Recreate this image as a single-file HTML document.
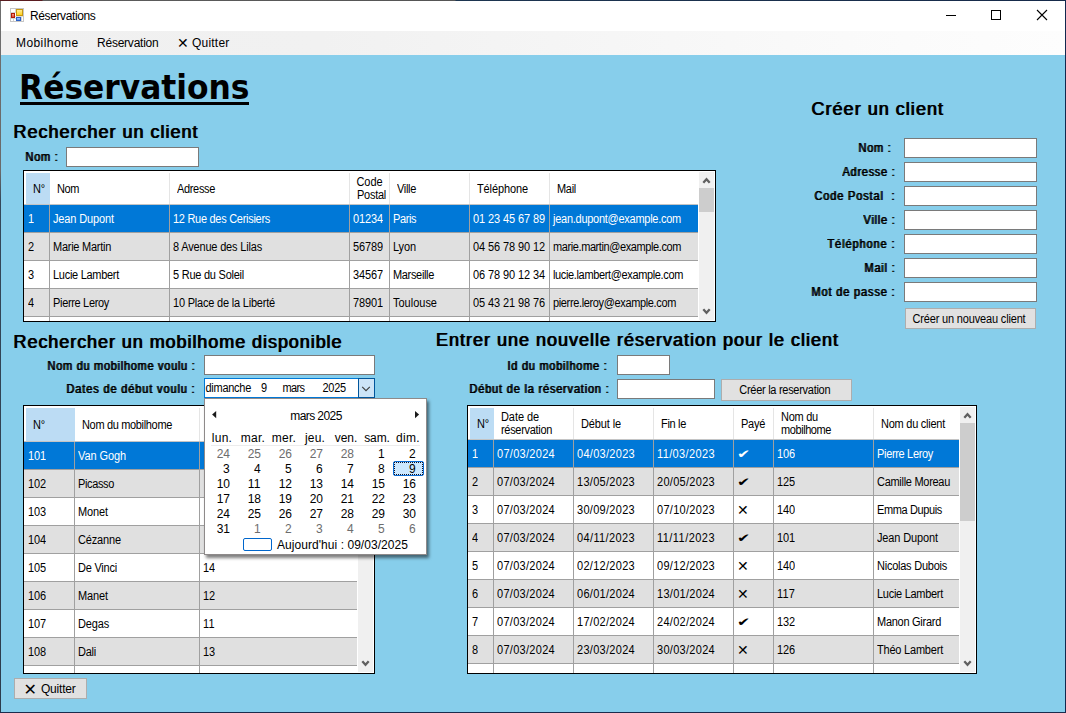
<!DOCTYPE html>
<html lang="fr"><head><meta charset="utf-8"><title>Réservations</title><style>
html,body{margin:0;padding:0}
body{width:1066px;height:713px;overflow:hidden;background:#87CEEB;position:relative;font-family:'Liberation Sans', sans-serif;color:#000}
.a{position:absolute;box-sizing:content-box}
.t{position:absolute;white-space:pre;line-height:normal}
.sb{text-shadow:1px 0 0 currentColor}

#frame{position:absolute;left:0;top:0;width:1066px;height:713px;pointer-events:none}
</style></head>
<body>
<div class="a" id="titlebar" style="left:1px;top:1px;width:1064px;height:30px;background:#fff"></div>
<svg class="a" style="left:10px;top:8px" width="14" height="14" viewBox="0 0 14 14" shape-rendering="crispEdges">
<defs><linearGradient id="gy" x1="0" y1="0" x2="0" y2="1"><stop offset="0" stop-color="#ffeb96"/><stop offset="1" stop-color="#ffd21e"/></linearGradient>
<linearGradient id="gr" x1="0" y1="0" x2="0" y2="1"><stop offset="0" stop-color="#f79a8c"/><stop offset="1" stop-color="#e0483a"/></linearGradient>
<linearGradient id="gb" x1="0" y1="0" x2="0" y2="1"><stop offset="0" stop-color="#a9c8ff"/><stop offset="1" stop-color="#5f94ee"/></linearGradient></defs>
<rect x="0" y="0" width="14" height="14" fill="#c6c6c6"/><rect x="1" y="1" width="12" height="12" fill="#fff"/>
<rect x="5" y="1" width="1" height="4" fill="#d4d4d4"/><rect x="1" y="4" width="5" height="1" fill="#d4d4d4"/>
<rect x="1" y="10" width="5" height="1" fill="#d4d4d4"/><rect x="3" y="10" width="1" height="3" fill="#d4d4d4"/>
<rect x="5" y="8" width="8" height="1" fill="#dcdcdc"/><rect x="11" y="9" width="1" height="4" fill="#d4d4d4"/>
<rect x="6" y="1" width="7" height="7" fill="#c8970e"/><rect x="7" y="2" width="5" height="5" fill="url(#gy)"/>
<rect x="1" y="5" width="4" height="5" fill="#b11a08"/><rect x="2" y="6" width="2" height="3" fill="url(#gr)"/>
<rect x="6" y="9" width="5" height="4" fill="#2c60c6"/><rect x="7" y="10" width="3" height="2" fill="url(#gb)"/>
</svg>
<span class="t " style="font:normal 12px 'Liberation Sans', sans-serif;letter-spacing:-0.378px;left:30.00px;top:9.00px;">Réservations</span>
<svg class="a" style="left:930px;top:1px" width="135" height="30" viewBox="0 0 135 30">
<path d="M16 14.5h10" stroke="#000" stroke-width="1" fill="none"/>
<rect x="61.5" y="9.5" width="9" height="9" stroke="#000" stroke-width="1" fill="none"/>
<path d="M107 9l10 10M117 9l-10 10" stroke="#000" stroke-width="1.1" fill="none"/>
</svg>
<div class="a" id="menubar" style="left:1px;top:31px;width:1064px;height:24px;background:linear-gradient(to right,#f0f0f0 0%,#f1f1f1 30%,#fbfbfb 85%,#fdfdfd 100%)"></div>
<span class="t " style="font:normal 12px 'Liberation Sans', sans-serif;letter-spacing:0.422px;left:16.00px;top:36.00px;">Mobilhome</span>
<span class="t " style="font:normal 12px 'Liberation Sans', sans-serif;letter-spacing:-0.230px;left:97.00px;top:36.00px;">Réservation</span>
<span class="t " style="font:normal 14px 'DejaVu Sans', sans-serif;left:177.00px;top:35.00px;">✕</span>
<span class="t " style="font:normal 12px 'Liberation Sans', sans-serif;letter-spacing:0.212px;left:192.00px;top:36.00px;">Quitter</span>
<span class="t " style="font:bold 33px 'DejaVu Sans Condensed', 'DejaVu Sans', sans-serif;transform:scaleX(1.0552);transform-origin:0 0;left:19.00px;top:68.00px;">Réservations</span>
<div class="a " style="left:20px;top:102px;width:229px;height:3px;background:#000;"></div>
<span class="t sb" style="font:normal 18px 'Liberation Sans', sans-serif;letter-spacing:0.995px;left:13.00px;top:122.00px;">Rechercher un client</span>
<span class="t sb" style="font:normal 18px 'Liberation Sans', sans-serif;letter-spacing:1.029px;left:811.00px;top:99.00px;">Créer un client</span>
<span class="t sb" style="font:normal 18px 'Liberation Sans', sans-serif;letter-spacing:0.936px;left:13.00px;top:332.00px;">Rechercher un mobilhome disponible</span>
<span class="t sb" style="font:normal 18px 'Liberation Sans', sans-serif;letter-spacing:0.995px;left:435.50px;top:329.50px;">Entrer une nouvelle réservation pour le client</span>
<span class="t sb" style="font:normal 11px 'Liberation Sans', sans-serif;letter-spacing:0.731px;transform:scaleY(1.11);transform-origin:0 10.00px;left:25.00px;top:151.00px;">Nom :</span>
<div class="a " style="left:66px;top:147px;width:131px;height:18px;background:#fff;border:1px solid #7A7A7A;"></div>
<span class="t sb" style="font:normal 11px 'Liberation Sans', sans-serif;letter-spacing:0.731px;transform:scaleY(1.11);transform-origin:0 10.00px;left:858.00px;top:142.00px;">Nom :</span>
<div class="a " style="left:904px;top:138px;width:131px;height:18px;background:#fff;border:1px solid #7A7A7A;"></div>
<span class="t sb" style="font:normal 11px 'Liberation Sans', sans-serif;letter-spacing:0.726px;transform:scaleY(1.11);transform-origin:0 10.00px;left:842.00px;top:166.00px;">Adresse :</span>
<div class="a " style="left:904px;top:162px;width:131px;height:18px;background:#fff;border:1px solid #7A7A7A;"></div>
<span class="t sb" style="font:normal 11px 'Liberation Sans', sans-serif;letter-spacing:0.850px;transform:scaleY(1.11);transform-origin:0 10.00px;left:814.00px;top:190.00px;">Code Postal  :</span>
<div class="a " style="left:904px;top:186px;width:131px;height:18px;background:#fff;border:1px solid #7A7A7A;"></div>
<span class="t sb" style="font:normal 11px 'Liberation Sans', sans-serif;letter-spacing:0.757px;transform:scaleY(1.11);transform-origin:0 10.00px;left:863.00px;top:214.00px;">Ville :</span>
<div class="a " style="left:904px;top:210px;width:131px;height:18px;background:#fff;border:1px solid #7A7A7A;"></div>
<span class="t sb" style="font:normal 11px 'Liberation Sans', sans-serif;letter-spacing:0.899px;transform:scaleY(1.11);transform-origin:0 10.00px;left:827.00px;top:238.00px;">Téléphone :</span>
<div class="a " style="left:904px;top:234px;width:131px;height:18px;background:#fff;border:1px solid #7A7A7A;"></div>
<span class="t sb" style="font:normal 11px 'Liberation Sans', sans-serif;letter-spacing:0.786px;transform:scaleY(1.11);transform-origin:0 10.00px;left:864.00px;top:262.00px;">Mail :</span>
<div class="a " style="left:904px;top:258px;width:131px;height:18px;background:#fff;border:1px solid #7A7A7A;"></div>
<span class="t sb" style="font:normal 11px 'Liberation Sans', sans-serif;letter-spacing:0.846px;transform:scaleY(1.11);transform-origin:0 10.00px;left:811.00px;top:286.00px;">Mot de passe :</span>
<div class="a " style="left:904px;top:282px;width:131px;height:18px;background:#fff;border:1px solid #7A7A7A;"></div>
<div class="a " style="left:905px;top:308px;width:129px;height:19px;background:#E1E1E1;border:1px solid #ADADAD;"></div>
<span class="t " style="font:normal 11px 'Liberation Sans', sans-serif;letter-spacing:-0.165px;transform:scaleY(1.11);transform-origin:0 10.00px;left:912.50px;top:313.00px;">Créer un nouveau client</span>
<span class="t sb" style="font:normal 11px 'Liberation Sans', sans-serif;letter-spacing:0.715px;transform:scaleY(1.11);transform-origin:0 10.00px;left:47.00px;top:360.00px;">Nom du mobilhome voulu :</span>
<div class="a " style="left:204px;top:355px;width:169px;height:18px;background:#fff;border:1px solid #7A7A7A;"></div>
<span class="t sb" style="font:normal 11px 'Liberation Sans', sans-serif;letter-spacing:0.860px;transform:scaleY(1.11);transform-origin:0 10.00px;left:66.00px;top:383.00px;">Dates de début voulu :</span>
<span class="t sb" style="font:normal 11px 'Liberation Sans', sans-serif;letter-spacing:0.739px;transform:scaleY(1.11);transform-origin:0 10.00px;left:507.00px;top:360.00px;">Id du mobilhome :</span>
<div class="a " style="left:617px;top:355px;width:51px;height:18px;background:#fff;border:1px solid #7A7A7A;"></div>
<span class="t sb" style="font:normal 11px 'Liberation Sans', sans-serif;letter-spacing:0.806px;transform:scaleY(1.11);transform-origin:0 10.00px;left:469.00px;top:383.00px;">Début de la réservation :</span>
<div class="a " style="left:617px;top:379px;width:96px;height:18px;background:#fff;border:1px solid #7A7A7A;"></div>
<div class="a " style="left:721px;top:379px;width:129px;height:20px;background:#E1E1E1;border:1px solid #ADADAD;"></div>
<span class="t " style="font:normal 11px 'Liberation Sans', sans-serif;letter-spacing:-0.280px;transform:scaleY(1.11);transform-origin:0 10.00px;left:739.25px;top:384.00px;">Créer la reservation</span>
<div class="a grid" style="left:23px;top:170px;width:691px;height:150px;border:1px solid #000;background:#fff;overflow:hidden">
<div class="a" style="left:2px;top:2px;width:24px;height:31px;background:#BCDCF4"></div>
<div class="a" style="left:145px;top:2px;width:1px;height:31px;background:#E5E5E5"></div>
<div class="a" style="left:325px;top:2px;width:1px;height:31px;background:#E5E5E5"></div>
<div class="a" style="left:365px;top:2px;width:1px;height:31px;background:#E5E5E5"></div>
<div class="a" style="left:445px;top:2px;width:1px;height:31px;background:#E5E5E5"></div>
<div class="a" style="left:525px;top:2px;width:1px;height:31px;background:#E5E5E5"></div>
<div class="a" style="left:0;top:33px;width:674px;height:1px;background:#C4C4C4"></div>
<div class="a row" style="left:0;top:34px;width:674px;height:27px;background:#0078D7;border-bottom:1px solid #A0A0A0"></div>
<div class="a row" style="left:0;top:62px;width:674px;height:27px;background:#E0E0E0;border-bottom:1px solid #A0A0A0"></div>
<div class="a row" style="left:0;top:90px;width:674px;height:27px;background:#fff;border-bottom:1px solid #A0A0A0"></div>
<div class="a row" style="left:0;top:118px;width:674px;height:27px;background:#E0E0E0;border-bottom:1px solid #A0A0A0"></div>
<div class="a row" style="left:0;top:146px;width:674px;height:27px;background:#fff;border-bottom:1px solid #A0A0A0"></div>
<div class="a" style="left:25px;top:34px;width:1px;height:116px;background:#A0A0A0"></div>
<div class="a" style="left:145px;top:34px;width:1px;height:116px;background:#A0A0A0"></div>
<div class="a" style="left:325px;top:34px;width:1px;height:116px;background:#A0A0A0"></div>
<div class="a" style="left:365px;top:34px;width:1px;height:116px;background:#A0A0A0"></div>
<div class="a" style="left:445px;top:34px;width:1px;height:116px;background:#A0A0A0"></div>
<div class="a" style="left:525px;top:34px;width:1px;height:116px;background:#A0A0A0"></div>
<div class="a" style="left:674px;top:0;width:17px;height:150px;background:#fff"></div>
<div class="a" style="left:675px;top:1px;width:15px;height:148px;background:#F0F0F0"></div>
<svg class="a" style="left:675px;top:1px" width="15" height="17" viewBox="0 0 15 17"><path d="M4.3 10.8L7.5 7.3L10.7 10.8" stroke="#606060" stroke-width="2.3" fill="none"/></svg>
<svg class="a" style="left:675px;top:132px" width="15" height="17" viewBox="0 0 15 17"><path d="M4.3 6.2L7.5 9.7L10.7 6.2" stroke="#606060" stroke-width="2.3" fill="none"/></svg>
<div class="a" style="left:675px;top:17px;width:15px;height:24px;background:#CDCDCD"></div>
</div>
<div class="a grid" style="left:23px;top:405px;width:350px;height:267px;border:1px solid #000;background:#fff;overflow:hidden">
<div class="a" style="left:2px;top:2px;width:49px;height:33px;background:#BCDCF4"></div>
<div class="a" style="left:175px;top:2px;width:1px;height:33px;background:#E5E5E5"></div>
<div class="a" style="left:0;top:35px;width:333px;height:1px;background:#C4C4C4"></div>
<div class="a row" style="left:0;top:36px;width:333px;height:27px;background:#0078D7;border-bottom:1px solid #A0A0A0"></div>
<div class="a row" style="left:0;top:64px;width:333px;height:27px;background:#E0E0E0;border-bottom:1px solid #A0A0A0"></div>
<div class="a row" style="left:0;top:92px;width:333px;height:27px;background:#fff;border-bottom:1px solid #A0A0A0"></div>
<div class="a row" style="left:0;top:120px;width:333px;height:27px;background:#E0E0E0;border-bottom:1px solid #A0A0A0"></div>
<div class="a row" style="left:0;top:148px;width:333px;height:27px;background:#fff;border-bottom:1px solid #A0A0A0"></div>
<div class="a row" style="left:0;top:176px;width:333px;height:27px;background:#E0E0E0;border-bottom:1px solid #A0A0A0"></div>
<div class="a row" style="left:0;top:204px;width:333px;height:27px;background:#fff;border-bottom:1px solid #A0A0A0"></div>
<div class="a row" style="left:0;top:232px;width:333px;height:27px;background:#E0E0E0;border-bottom:1px solid #A0A0A0"></div>
<div class="a row" style="left:0;top:260px;width:333px;height:27px;background:#fff;border-bottom:1px solid #A0A0A0"></div>
<div class="a" style="left:50px;top:36px;width:1px;height:231px;background:#A0A0A0"></div>
<div class="a" style="left:175px;top:36px;width:1px;height:231px;background:#A0A0A0"></div>
<div class="a" style="left:333px;top:0;width:17px;height:267px;background:#fff"></div>
<div class="a" style="left:334px;top:1px;width:15px;height:265px;background:#F0F0F0"></div>
<svg class="a" style="left:334px;top:1px" width="15" height="17" viewBox="0 0 15 17"><path d="M4.3 10.8L7.5 7.3L10.7 10.8" stroke="#606060" stroke-width="2.3" fill="none"/></svg>
<svg class="a" style="left:334px;top:249px" width="15" height="17" viewBox="0 0 15 17"><path d="M4.3 6.2L7.5 9.7L10.7 6.2" stroke="#606060" stroke-width="2.3" fill="none"/></svg>
<div class="a" style="left:334px;top:17px;width:15px;height:98px;background:#CDCDCD"></div>
</div>
<div class="a grid" style="left:467px;top:405px;width:508px;height:267px;border:1px solid #000;background:#fff;overflow:hidden">
<div class="a" style="left:2px;top:2px;width:24px;height:31px;background:#BCDCF4"></div>
<div class="a" style="left:105px;top:2px;width:1px;height:31px;background:#E5E5E5"></div>
<div class="a" style="left:185px;top:2px;width:1px;height:31px;background:#E5E5E5"></div>
<div class="a" style="left:265px;top:2px;width:1px;height:31px;background:#E5E5E5"></div>
<div class="a" style="left:305px;top:2px;width:1px;height:31px;background:#E5E5E5"></div>
<div class="a" style="left:405px;top:2px;width:1px;height:31px;background:#E5E5E5"></div>
<div class="a" style="left:0;top:33px;width:491px;height:1px;background:#C4C4C4"></div>
<div class="a row" style="left:0;top:34px;width:491px;height:27px;background:#0078D7;border-bottom:1px solid #A0A0A0"></div>
<div class="a row" style="left:0;top:62px;width:491px;height:27px;background:#E0E0E0;border-bottom:1px solid #A0A0A0"></div>
<div class="a row" style="left:0;top:90px;width:491px;height:27px;background:#fff;border-bottom:1px solid #A0A0A0"></div>
<div class="a row" style="left:0;top:118px;width:491px;height:27px;background:#E0E0E0;border-bottom:1px solid #A0A0A0"></div>
<div class="a row" style="left:0;top:146px;width:491px;height:27px;background:#fff;border-bottom:1px solid #A0A0A0"></div>
<div class="a row" style="left:0;top:174px;width:491px;height:27px;background:#E0E0E0;border-bottom:1px solid #A0A0A0"></div>
<div class="a row" style="left:0;top:202px;width:491px;height:27px;background:#fff;border-bottom:1px solid #A0A0A0"></div>
<div class="a row" style="left:0;top:230px;width:491px;height:27px;background:#E0E0E0;border-bottom:1px solid #A0A0A0"></div>
<div class="a row" style="left:0;top:258px;width:491px;height:27px;background:#fff;border-bottom:1px solid #A0A0A0"></div>
<div class="a" style="left:25px;top:34px;width:1px;height:233px;background:#A0A0A0"></div>
<div class="a" style="left:105px;top:34px;width:1px;height:233px;background:#A0A0A0"></div>
<div class="a" style="left:185px;top:34px;width:1px;height:233px;background:#A0A0A0"></div>
<div class="a" style="left:265px;top:34px;width:1px;height:233px;background:#A0A0A0"></div>
<div class="a" style="left:305px;top:34px;width:1px;height:233px;background:#A0A0A0"></div>
<div class="a" style="left:405px;top:34px;width:1px;height:233px;background:#A0A0A0"></div>
<div class="a" style="left:491px;top:0;width:17px;height:267px;background:#fff"></div>
<div class="a" style="left:492px;top:1px;width:15px;height:265px;background:#F0F0F0"></div>
<svg class="a" style="left:492px;top:1px" width="15" height="17" viewBox="0 0 15 17"><path d="M4.3 10.8L7.5 7.3L10.7 10.8" stroke="#606060" stroke-width="2.3" fill="none"/></svg>
<svg class="a" style="left:492px;top:249px" width="15" height="17" viewBox="0 0 15 17"><path d="M4.3 6.2L7.5 9.7L10.7 6.2" stroke="#606060" stroke-width="2.3" fill="none"/></svg>
<div class="a" style="left:492px;top:17px;width:15px;height:98px;background:#CDCDCD"></div>
</div>
<span class="t g" style="font:normal 11px 'Liberation Sans', sans-serif;letter-spacing:-0.172px;transform:scaleY(1.11);transform-origin:0 10.00px;left:33.00px;top:183.00px;">N°</span>
<span class="t g" style="font:normal 11px 'Liberation Sans', sans-serif;letter-spacing:-0.411px;transform:scaleY(1.11);transform-origin:0 10.00px;left:57.00px;top:183.00px;">Nom</span>
<span class="t g" style="font:normal 11px 'Liberation Sans', sans-serif;letter-spacing:-0.337px;transform:scaleY(1.11);transform-origin:0 10.00px;left:177.00px;top:183.00px;">Adresse</span>
<span class="t g" style="font:normal 11px 'Liberation Sans', sans-serif;letter-spacing:-0.074px;transform:scaleY(1.11);transform-origin:0 10.00px;left:356.50px;top:176.00px;">Code</span>
<span class="t g" style="font:normal 11px 'Liberation Sans', sans-serif;letter-spacing:-0.263px;transform:scaleY(1.11);transform-origin:0 10.00px;left:357.00px;top:189.00px;">Postal</span>
<span class="t g" style="font:normal 11px 'Liberation Sans', sans-serif;letter-spacing:-0.319px;transform:scaleY(1.11);transform-origin:0 10.00px;left:397.00px;top:183.00px;">Ville</span>
<span class="t g" style="font:normal 11px 'Liberation Sans', sans-serif;letter-spacing:-0.111px;transform:scaleY(1.11);transform-origin:0 10.00px;left:477.00px;top:183.00px;">Téléphone</span>
<span class="t g" style="font:normal 11px 'Liberation Sans', sans-serif;letter-spacing:-0.293px;transform:scaleY(1.11);transform-origin:0 10.00px;left:557.00px;top:183.00px;">Mail</span>
<span class="t g" style="font:normal 11px 'Liberation Sans', sans-serif;letter-spacing:-0.125px;transform:scaleY(1.11);transform-origin:0 10.00px;left:28.00px;top:212.50px;color:#fff;">1</span>
<span class="t g" style="font:normal 11px 'Liberation Sans', sans-serif;letter-spacing:-0.126px;transform:scaleY(1.11);transform-origin:0 10.00px;left:53.00px;top:212.50px;color:#fff;">Jean Dupont</span>
<span class="t g" style="font:normal 11px 'Liberation Sans', sans-serif;letter-spacing:-0.286px;transform:scaleY(1.11);transform-origin:0 10.00px;left:173.00px;top:212.50px;color:#fff;">12 Rue des Cerisiers</span>
<span class="t g" style="font:normal 11px 'Liberation Sans', sans-serif;letter-spacing:-0.119px;transform:scaleY(1.11);transform-origin:0 10.00px;left:353.00px;top:212.50px;color:#fff;">01234</span>
<span class="t g" style="font:normal 11px 'Liberation Sans', sans-serif;letter-spacing:-0.412px;transform:scaleY(1.11);transform-origin:0 10.00px;left:393.00px;top:212.50px;color:#fff;">Paris</span>
<span class="t g" style="font:normal 11px 'Liberation Sans', sans-serif;letter-spacing:-0.100px;transform:scaleY(1.11);transform-origin:0 10.00px;left:473.00px;top:212.50px;color:#fff;">01 23 45 67 89</span>
<span class="t g" style="font:normal 11px 'Liberation Sans', sans-serif;letter-spacing:-0.265px;transform:scaleY(1.11);transform-origin:0 10.00px;left:553.00px;top:212.50px;color:#fff;">jean.dupont@example.com</span>
<span class="t g" style="font:normal 11px 'Liberation Sans', sans-serif;letter-spacing:-0.125px;transform:scaleY(1.11);transform-origin:0 10.00px;left:28.00px;top:240.50px;">2</span>
<span class="t g" style="font:normal 11px 'Liberation Sans', sans-serif;letter-spacing:-0.260px;transform:scaleY(1.11);transform-origin:0 10.00px;left:53.00px;top:240.50px;">Marie Martin</span>
<span class="t g" style="font:normal 11px 'Liberation Sans', sans-serif;letter-spacing:-0.175px;transform:scaleY(1.11);transform-origin:0 10.00px;left:173.00px;top:240.50px;">8 Avenue des Lilas</span>
<span class="t g" style="font:normal 11px 'Liberation Sans', sans-serif;letter-spacing:-0.119px;transform:scaleY(1.11);transform-origin:0 10.00px;left:353.00px;top:240.50px;">56789</span>
<span class="t g" style="font:normal 11px 'Liberation Sans', sans-serif;letter-spacing:-0.113px;transform:scaleY(1.11);transform-origin:0 10.00px;left:393.00px;top:240.50px;">Lyon</span>
<span class="t g" style="font:normal 11px 'Liberation Sans', sans-serif;letter-spacing:-0.100px;transform:scaleY(1.11);transform-origin:0 10.00px;left:473.00px;top:240.50px;">04 56 78 90 12</span>
<span class="t g" style="font:normal 11px 'Liberation Sans', sans-serif;letter-spacing:-0.405px;transform:scaleY(1.11);transform-origin:0 10.00px;left:553.00px;top:240.50px;">marie.martin@example.com</span>
<span class="t g" style="font:normal 11px 'Liberation Sans', sans-serif;letter-spacing:-0.125px;transform:scaleY(1.11);transform-origin:0 10.00px;left:28.00px;top:268.50px;">3</span>
<span class="t g" style="font:normal 11px 'Liberation Sans', sans-serif;letter-spacing:-0.286px;transform:scaleY(1.11);transform-origin:0 10.00px;left:53.00px;top:268.50px;">Lucie Lambert</span>
<span class="t g" style="font:normal 11px 'Liberation Sans', sans-serif;letter-spacing:-0.241px;transform:scaleY(1.11);transform-origin:0 10.00px;left:173.00px;top:268.50px;">5 Rue du Soleil</span>
<span class="t g" style="font:normal 11px 'Liberation Sans', sans-serif;letter-spacing:-0.119px;transform:scaleY(1.11);transform-origin:0 10.00px;left:353.00px;top:268.50px;">34567</span>
<span class="t g" style="font:normal 11px 'Liberation Sans', sans-serif;letter-spacing:-0.335px;transform:scaleY(1.11);transform-origin:0 10.00px;left:393.00px;top:268.50px;">Marseille</span>
<span class="t g" style="font:normal 11px 'Liberation Sans', sans-serif;letter-spacing:-0.100px;transform:scaleY(1.11);transform-origin:0 10.00px;left:473.00px;top:268.50px;">06 78 90 12 34</span>
<span class="t g" style="font:normal 11px 'Liberation Sans', sans-serif;letter-spacing:-0.358px;transform:scaleY(1.11);transform-origin:0 10.00px;left:553.00px;top:268.50px;">lucie.lambert@example.com</span>
<span class="t g" style="font:normal 11px 'Liberation Sans', sans-serif;letter-spacing:-0.125px;transform:scaleY(1.11);transform-origin:0 10.00px;left:28.00px;top:296.50px;">4</span>
<span class="t g" style="font:normal 11px 'Liberation Sans', sans-serif;letter-spacing:-0.327px;transform:scaleY(1.11);transform-origin:0 10.00px;left:53.00px;top:296.50px;">Pierre Leroy</span>
<span class="t g" style="font:normal 11px 'Liberation Sans', sans-serif;letter-spacing:-0.201px;transform:scaleY(1.11);transform-origin:0 10.00px;left:173.00px;top:296.50px;">10 Place de la Liberté</span>
<span class="t g" style="font:normal 11px 'Liberation Sans', sans-serif;letter-spacing:-0.119px;transform:scaleY(1.11);transform-origin:0 10.00px;left:353.00px;top:296.50px;">78901</span>
<span class="t g" style="font:normal 11px 'Liberation Sans', sans-serif;letter-spacing:-0.006px;transform:scaleY(1.11);transform-origin:0 10.00px;left:393.00px;top:296.50px;">Toulouse</span>
<span class="t g" style="font:normal 11px 'Liberation Sans', sans-serif;letter-spacing:-0.100px;transform:scaleY(1.11);transform-origin:0 10.00px;left:473.00px;top:296.50px;">05 43 21 98 76</span>
<span class="t g" style="font:normal 11px 'Liberation Sans', sans-serif;letter-spacing:-0.359px;transform:scaleY(1.11);transform-origin:0 10.00px;left:553.00px;top:296.50px;">pierre.leroy@example.com</span>
<span class="t g" style="font:normal 11px 'Liberation Sans', sans-serif;letter-spacing:-0.172px;transform:scaleY(1.11);transform-origin:0 10.00px;left:33.00px;top:419.00px;">N°</span>
<span class="t g" style="font:normal 11px 'Liberation Sans', sans-serif;letter-spacing:-0.336px;transform:scaleY(1.11);transform-origin:0 10.00px;left:82.00px;top:419.00px;">Nom du mobilhome</span>
<span class="t g" style="font:normal 11px 'Liberation Sans', sans-serif;letter-spacing:-0.120px;transform:scaleY(1.11);transform-origin:0 10.00px;left:28.00px;top:449.50px;color:#fff;">101</span>
<span class="t g" style="font:normal 11px 'Liberation Sans', sans-serif;letter-spacing:-0.092px;transform:scaleY(1.11);transform-origin:0 10.00px;left:78.00px;top:449.50px;color:#fff;">Van Gogh</span>
<span class="t g" style="font:normal 11px 'Liberation Sans', sans-serif;letter-spacing:-0.120px;transform:scaleY(1.11);transform-origin:0 10.00px;left:28.00px;top:477.50px;">102</span>
<span class="t g" style="font:normal 11px 'Liberation Sans', sans-serif;letter-spacing:-0.362px;transform:scaleY(1.11);transform-origin:0 10.00px;left:78.00px;top:477.50px;">Picasso</span>
<span class="t g" style="font:normal 11px 'Liberation Sans', sans-serif;letter-spacing:-0.120px;transform:scaleY(1.11);transform-origin:0 10.00px;left:28.00px;top:505.50px;">103</span>
<span class="t g" style="font:normal 11px 'Liberation Sans', sans-serif;letter-spacing:-0.116px;transform:scaleY(1.11);transform-origin:0 10.00px;left:78.00px;top:505.50px;">Monet</span>
<span class="t g" style="font:normal 11px 'Liberation Sans', sans-serif;letter-spacing:-0.120px;transform:scaleY(1.11);transform-origin:0 10.00px;left:28.00px;top:533.50px;">104</span>
<span class="t g" style="font:normal 11px 'Liberation Sans', sans-serif;letter-spacing:-0.150px;transform:scaleY(1.11);transform-origin:0 10.00px;left:78.00px;top:533.50px;">Cézanne</span>
<span class="t g" style="font:normal 11px 'Liberation Sans', sans-serif;letter-spacing:-0.120px;transform:scaleY(1.11);transform-origin:0 10.00px;left:28.00px;top:561.50px;">105</span>
<span class="t g" style="font:normal 11px 'Liberation Sans', sans-serif;letter-spacing:-0.221px;transform:scaleY(1.11);transform-origin:0 10.00px;left:78.00px;top:561.50px;">De Vinci</span>
<span class="t g" style="font:normal 11px 'Liberation Sans', sans-serif;letter-spacing:-0.125px;transform:scaleY(1.11);transform-origin:0 10.00px;left:203.00px;top:561.50px;">14</span>
<span class="t g" style="font:normal 11px 'Liberation Sans', sans-serif;letter-spacing:-0.120px;transform:scaleY(1.11);transform-origin:0 10.00px;left:28.00px;top:589.50px;">106</span>
<span class="t g" style="font:normal 11px 'Liberation Sans', sans-serif;letter-spacing:-0.116px;transform:scaleY(1.11);transform-origin:0 10.00px;left:78.00px;top:589.50px;">Manet</span>
<span class="t g" style="font:normal 11px 'Liberation Sans', sans-serif;letter-spacing:-0.125px;transform:scaleY(1.11);transform-origin:0 10.00px;left:203.00px;top:589.50px;">12</span>
<span class="t g" style="font:normal 11px 'Liberation Sans', sans-serif;letter-spacing:-0.120px;transform:scaleY(1.11);transform-origin:0 10.00px;left:28.00px;top:617.50px;">107</span>
<span class="t g" style="font:normal 11px 'Liberation Sans', sans-serif;letter-spacing:-0.159px;transform:scaleY(1.11);transform-origin:0 10.00px;left:78.00px;top:617.50px;">Degas</span>
<span class="t g" style="font:normal 11px 'Liberation Sans', sans-serif;letter-spacing:0.289px;transform:scaleY(1.11);transform-origin:0 10.00px;left:203.00px;top:617.50px;">11</span>
<span class="t g" style="font:normal 11px 'Liberation Sans', sans-serif;letter-spacing:-0.120px;transform:scaleY(1.11);transform-origin:0 10.00px;left:28.00px;top:645.50px;">108</span>
<span class="t g" style="font:normal 11px 'Liberation Sans', sans-serif;letter-spacing:-0.238px;transform:scaleY(1.11);transform-origin:0 10.00px;left:78.00px;top:645.50px;">Dali</span>
<span class="t g" style="font:normal 11px 'Liberation Sans', sans-serif;letter-spacing:-0.125px;transform:scaleY(1.11);transform-origin:0 10.00px;left:203.00px;top:645.50px;">13</span>
<span class="t g" style="font:normal 11px 'Liberation Sans', sans-serif;letter-spacing:-0.172px;transform:scaleY(1.11);transform-origin:0 10.00px;left:477.00px;top:417.50px;">N°</span>
<span class="t g" style="font:normal 11px 'Liberation Sans', sans-serif;letter-spacing:-0.076px;transform:scaleY(1.11);transform-origin:0 10.00px;left:501.00px;top:410.50px;">Date de</span>
<span class="t g" style="font:normal 11px 'Liberation Sans', sans-serif;letter-spacing:-0.311px;transform:scaleY(1.11);transform-origin:0 10.00px;left:501.00px;top:424.00px;">réservation</span>
<span class="t g" style="font:normal 11px 'Liberation Sans', sans-serif;letter-spacing:-0.123px;transform:scaleY(1.11);transform-origin:0 10.00px;left:581.00px;top:417.50px;">Début le</span>
<span class="t g" style="font:normal 11px 'Liberation Sans', sans-serif;letter-spacing:-0.318px;transform:scaleY(1.11);transform-origin:0 10.00px;left:661.00px;top:417.50px;">Fin le</span>
<span class="t g" style="font:normal 11px 'Liberation Sans', sans-serif;letter-spacing:-0.270px;transform:scaleY(1.11);transform-origin:0 10.00px;left:741.00px;top:417.50px;">Payé</span>
<span class="t g" style="font:normal 11px 'Liberation Sans', sans-serif;letter-spacing:-0.255px;transform:scaleY(1.11);transform-origin:0 10.00px;left:781.00px;top:410.50px;">Nom du</span>
<span class="t g" style="font:normal 11px 'Liberation Sans', sans-serif;letter-spacing:-0.424px;transform:scaleY(1.11);transform-origin:0 10.00px;left:781.00px;top:424.00px;">mobilhome</span>
<span class="t g" style="font:normal 11px 'Liberation Sans', sans-serif;letter-spacing:-0.251px;transform:scaleY(1.11);transform-origin:0 10.00px;left:881.00px;top:417.50px;">Nom du client</span>
<span class="t g" style="font:normal 11px 'Liberation Sans', sans-serif;letter-spacing:-0.125px;transform:scaleY(1.11);transform-origin:0 10.00px;left:472.00px;top:447.50px;color:#fff;">1</span>
<span class="t g" style="font:normal 11px 'Liberation Sans', sans-serif;letter-spacing:0.294px;transform:scaleY(1.11);transform-origin:0 10.00px;left:497.00px;top:447.50px;color:#fff;">07/03/2024</span>
<span class="t g" style="font:normal 11px 'Liberation Sans', sans-serif;letter-spacing:0.294px;transform:scaleY(1.11);transform-origin:0 10.00px;left:577.00px;top:447.50px;color:#fff;">04/03/2023</span>
<span class="t g" style="font:normal 11px 'Liberation Sans', sans-serif;letter-spacing:0.375px;transform:scaleY(1.11);transform-origin:0 10.00px;left:657.00px;top:447.50px;color:#fff;">11/03/2023</span>
<span class="t g" style="font:normal 14px 'DejaVu Sans', sans-serif;transform:scale(1.12,0.85);transform-origin:0 13.00px;left:736.50px;top:444.50px;color:#fff;">✔</span>
<span class="t g" style="font:normal 11px 'Liberation Sans', sans-serif;letter-spacing:-0.120px;transform:scaleY(1.11);transform-origin:0 10.00px;left:777.00px;top:447.50px;color:#fff;">106</span>
<span class="t g" style="font:normal 11px 'Liberation Sans', sans-serif;letter-spacing:-0.327px;transform:scaleY(1.11);transform-origin:0 10.00px;left:877.00px;top:447.50px;color:#fff;">Pierre Leroy</span>
<span class="t g" style="font:normal 11px 'Liberation Sans', sans-serif;letter-spacing:-0.125px;transform:scaleY(1.11);transform-origin:0 10.00px;left:472.00px;top:475.50px;">2</span>
<span class="t g" style="font:normal 11px 'Liberation Sans', sans-serif;letter-spacing:0.294px;transform:scaleY(1.11);transform-origin:0 10.00px;left:497.00px;top:475.50px;">07/03/2024</span>
<span class="t g" style="font:normal 11px 'Liberation Sans', sans-serif;letter-spacing:0.294px;transform:scaleY(1.11);transform-origin:0 10.00px;left:577.00px;top:475.50px;">13/05/2023</span>
<span class="t g" style="font:normal 11px 'Liberation Sans', sans-serif;letter-spacing:0.294px;transform:scaleY(1.11);transform-origin:0 10.00px;left:657.00px;top:475.50px;">20/05/2023</span>
<span class="t g" style="font:normal 14px 'DejaVu Sans', sans-serif;transform:scale(1.12,0.85);transform-origin:0 13.00px;left:736.50px;top:472.50px;">✔</span>
<span class="t g" style="font:normal 11px 'Liberation Sans', sans-serif;letter-spacing:-0.120px;transform:scaleY(1.11);transform-origin:0 10.00px;left:777.00px;top:475.50px;">125</span>
<span class="t g" style="font:normal 11px 'Liberation Sans', sans-serif;letter-spacing:-0.288px;transform:scaleY(1.11);transform-origin:0 10.00px;left:877.00px;top:475.50px;">Camille Moreau</span>
<span class="t g" style="font:normal 11px 'Liberation Sans', sans-serif;letter-spacing:-0.125px;transform:scaleY(1.11);transform-origin:0 10.00px;left:472.00px;top:503.50px;">3</span>
<span class="t g" style="font:normal 11px 'Liberation Sans', sans-serif;letter-spacing:0.294px;transform:scaleY(1.11);transform-origin:0 10.00px;left:497.00px;top:503.50px;">07/03/2024</span>
<span class="t g" style="font:normal 11px 'Liberation Sans', sans-serif;letter-spacing:0.294px;transform:scaleY(1.11);transform-origin:0 10.00px;left:577.00px;top:503.50px;">30/09/2023</span>
<span class="t g" style="font:normal 11px 'Liberation Sans', sans-serif;letter-spacing:0.294px;transform:scaleY(1.11);transform-origin:0 10.00px;left:657.00px;top:503.50px;">07/10/2023</span>
<span class="t g" style="font:normal 14px 'DejaVu Sans', sans-serif;left:737.00px;top:501.50px;">✕</span>
<span class="t g" style="font:normal 11px 'Liberation Sans', sans-serif;letter-spacing:-0.120px;transform:scaleY(1.11);transform-origin:0 10.00px;left:777.00px;top:503.50px;">140</span>
<span class="t g" style="font:normal 11px 'Liberation Sans', sans-serif;letter-spacing:-0.371px;transform:scaleY(1.11);transform-origin:0 10.00px;left:877.00px;top:503.50px;">Emma Dupuis</span>
<span class="t g" style="font:normal 11px 'Liberation Sans', sans-serif;letter-spacing:-0.125px;transform:scaleY(1.11);transform-origin:0 10.00px;left:472.00px;top:531.50px;">4</span>
<span class="t g" style="font:normal 11px 'Liberation Sans', sans-serif;letter-spacing:0.294px;transform:scaleY(1.11);transform-origin:0 10.00px;left:497.00px;top:531.50px;">07/03/2024</span>
<span class="t g" style="font:normal 11px 'Liberation Sans', sans-serif;letter-spacing:0.375px;transform:scaleY(1.11);transform-origin:0 10.00px;left:577.00px;top:531.50px;">04/11/2023</span>
<span class="t g" style="font:normal 11px 'Liberation Sans', sans-serif;letter-spacing:0.458px;transform:scaleY(1.11);transform-origin:0 10.00px;left:657.00px;top:531.50px;">11/11/2023</span>
<span class="t g" style="font:normal 14px 'DejaVu Sans', sans-serif;transform:scale(1.12,0.85);transform-origin:0 13.00px;left:736.50px;top:528.50px;">✔</span>
<span class="t g" style="font:normal 11px 'Liberation Sans', sans-serif;letter-spacing:-0.120px;transform:scaleY(1.11);transform-origin:0 10.00px;left:777.00px;top:531.50px;">101</span>
<span class="t g" style="font:normal 11px 'Liberation Sans', sans-serif;letter-spacing:-0.126px;transform:scaleY(1.11);transform-origin:0 10.00px;left:877.00px;top:531.50px;">Jean Dupont</span>
<span class="t g" style="font:normal 11px 'Liberation Sans', sans-serif;letter-spacing:-0.125px;transform:scaleY(1.11);transform-origin:0 10.00px;left:472.00px;top:559.50px;">5</span>
<span class="t g" style="font:normal 11px 'Liberation Sans', sans-serif;letter-spacing:0.294px;transform:scaleY(1.11);transform-origin:0 10.00px;left:497.00px;top:559.50px;">07/03/2024</span>
<span class="t g" style="font:normal 11px 'Liberation Sans', sans-serif;letter-spacing:0.294px;transform:scaleY(1.11);transform-origin:0 10.00px;left:577.00px;top:559.50px;">02/12/2023</span>
<span class="t g" style="font:normal 11px 'Liberation Sans', sans-serif;letter-spacing:0.294px;transform:scaleY(1.11);transform-origin:0 10.00px;left:657.00px;top:559.50px;">09/12/2023</span>
<span class="t g" style="font:normal 14px 'DejaVu Sans', sans-serif;left:737.00px;top:557.50px;">✕</span>
<span class="t g" style="font:normal 11px 'Liberation Sans', sans-serif;letter-spacing:-0.120px;transform:scaleY(1.11);transform-origin:0 10.00px;left:777.00px;top:559.50px;">140</span>
<span class="t g" style="font:normal 11px 'Liberation Sans', sans-serif;letter-spacing:-0.241px;transform:scaleY(1.11);transform-origin:0 10.00px;left:877.00px;top:559.50px;">Nicolas Dubois</span>
<span class="t g" style="font:normal 11px 'Liberation Sans', sans-serif;letter-spacing:-0.125px;transform:scaleY(1.11);transform-origin:0 10.00px;left:472.00px;top:587.50px;">6</span>
<span class="t g" style="font:normal 11px 'Liberation Sans', sans-serif;letter-spacing:0.294px;transform:scaleY(1.11);transform-origin:0 10.00px;left:497.00px;top:587.50px;">07/03/2024</span>
<span class="t g" style="font:normal 11px 'Liberation Sans', sans-serif;letter-spacing:0.294px;transform:scaleY(1.11);transform-origin:0 10.00px;left:577.00px;top:587.50px;">06/01/2024</span>
<span class="t g" style="font:normal 11px 'Liberation Sans', sans-serif;letter-spacing:0.294px;transform:scaleY(1.11);transform-origin:0 10.00px;left:657.00px;top:587.50px;">13/01/2024</span>
<span class="t g" style="font:normal 14px 'DejaVu Sans', sans-serif;left:737.00px;top:585.50px;">✕</span>
<span class="t g" style="font:normal 11px 'Liberation Sans', sans-serif;letter-spacing:0.151px;transform:scaleY(1.11);transform-origin:0 10.00px;left:777.00px;top:587.50px;">117</span>
<span class="t g" style="font:normal 11px 'Liberation Sans', sans-serif;letter-spacing:-0.286px;transform:scaleY(1.11);transform-origin:0 10.00px;left:877.00px;top:587.50px;">Lucie Lambert</span>
<span class="t g" style="font:normal 11px 'Liberation Sans', sans-serif;letter-spacing:-0.125px;transform:scaleY(1.11);transform-origin:0 10.00px;left:472.00px;top:615.50px;">7</span>
<span class="t g" style="font:normal 11px 'Liberation Sans', sans-serif;letter-spacing:0.294px;transform:scaleY(1.11);transform-origin:0 10.00px;left:497.00px;top:615.50px;">07/03/2024</span>
<span class="t g" style="font:normal 11px 'Liberation Sans', sans-serif;letter-spacing:0.294px;transform:scaleY(1.11);transform-origin:0 10.00px;left:577.00px;top:615.50px;">17/02/2024</span>
<span class="t g" style="font:normal 11px 'Liberation Sans', sans-serif;letter-spacing:0.294px;transform:scaleY(1.11);transform-origin:0 10.00px;left:657.00px;top:615.50px;">24/02/2024</span>
<span class="t g" style="font:normal 14px 'DejaVu Sans', sans-serif;transform:scale(1.12,0.85);transform-origin:0 13.00px;left:736.50px;top:612.50px;">✔</span>
<span class="t g" style="font:normal 11px 'Liberation Sans', sans-serif;letter-spacing:-0.120px;transform:scaleY(1.11);transform-origin:0 10.00px;left:777.00px;top:615.50px;">132</span>
<span class="t g" style="font:normal 11px 'Liberation Sans', sans-serif;letter-spacing:-0.272px;transform:scaleY(1.11);transform-origin:0 10.00px;left:877.00px;top:615.50px;">Manon Girard</span>
<span class="t g" style="font:normal 11px 'Liberation Sans', sans-serif;letter-spacing:-0.125px;transform:scaleY(1.11);transform-origin:0 10.00px;left:472.00px;top:643.50px;">8</span>
<span class="t g" style="font:normal 11px 'Liberation Sans', sans-serif;letter-spacing:0.294px;transform:scaleY(1.11);transform-origin:0 10.00px;left:497.00px;top:643.50px;">07/03/2024</span>
<span class="t g" style="font:normal 11px 'Liberation Sans', sans-serif;letter-spacing:0.294px;transform:scaleY(1.11);transform-origin:0 10.00px;left:577.00px;top:643.50px;">23/03/2024</span>
<span class="t g" style="font:normal 11px 'Liberation Sans', sans-serif;letter-spacing:0.294px;transform:scaleY(1.11);transform-origin:0 10.00px;left:657.00px;top:643.50px;">30/03/2024</span>
<span class="t g" style="font:normal 14px 'DejaVu Sans', sans-serif;left:737.00px;top:641.50px;">✕</span>
<span class="t g" style="font:normal 11px 'Liberation Sans', sans-serif;letter-spacing:-0.120px;transform:scaleY(1.11);transform-origin:0 10.00px;left:777.00px;top:643.50px;">126</span>
<span class="t g" style="font:normal 11px 'Liberation Sans', sans-serif;letter-spacing:-0.207px;transform:scaleY(1.11);transform-origin:0 10.00px;left:877.00px;top:643.50px;">Théo Lambert</span>
<div class="a" style="left:204px;top:378px;width:169px;height:18px;background:#fff;border:1px solid #0078D7"></div>
<div class="a" style="left:358px;top:378px;width:15px;height:18px;background:#CCE4F7;border:1px solid #00559B"></div>
<svg class="a" style="left:358px;top:378px" width="17" height="20" viewBox="0 0 17 20"><path d="M4.2 8.9L8 12.7L11.8 8.9" stroke="#3c3c3c" stroke-width="1.1" fill="none"/></svg>
<span class="t " style="font:normal 11px 'Liberation Sans', sans-serif;letter-spacing:-0.275px;transform:scaleY(1.11);transform-origin:0 10.00px;left:205.50px;top:382.00px;">dimanche</span>
<span class="t " style="font:normal 11px 'Liberation Sans', sans-serif;transform:scaleY(1.11);transform-origin:0 10.00px;left:261.00px;top:382.00px;">9</span>
<span class="t " style="font:normal 11px 'Liberation Sans', sans-serif;letter-spacing:-0.613px;transform:scaleY(1.11);transform-origin:0 10.00px;left:282.50px;top:382.00px;">mars</span>
<span class="t " style="font:normal 11px 'Liberation Sans', sans-serif;letter-spacing:-0.246px;transform:scaleY(1.11);transform-origin:0 10.00px;left:322.50px;top:382.00px;">2025</span>
<div class="a" id="cal" style="left:204px;top:398px;width:221px;height:155px;background:#fff;border:1px solid #8e8a8a;box-shadow:2px 3px 3px rgba(0,0,0,0.5)"></div>
<svg class="a" style="left:210px;top:408px" width="212" height="12" viewBox="0 0 212 12"><path d="M6.2 3v7.2L2.1 6.6z" fill="#1a1a1a"/><path d="M205 3v7.2l4.1-3.6z" fill="#1a1a1a"/></svg>
<span class="t " style="font:normal 12px 'Liberation Sans', sans-serif;letter-spacing:-0.578px;left:290.25px;top:408.50px;">mars 2025</span>
<span class="t " style="font:normal 12px 'Liberation Sans', sans-serif;letter-spacing:0.235px;left:211.85px;top:431.00px;">lun.</span>
<span class="t " style="font:normal 12px 'Liberation Sans', sans-serif;letter-spacing:0.239px;left:240.85px;top:431.00px;">mar.</span>
<span class="t " style="font:normal 12px 'Liberation Sans', sans-serif;letter-spacing:0.239px;left:271.85px;top:431.00px;">mer.</span>
<span class="t " style="font:normal 12px 'Liberation Sans', sans-serif;letter-spacing:0.160px;left:305.00px;top:431.00px;">jeu.</span>
<span class="t " style="font:normal 12px 'Liberation Sans', sans-serif;letter-spacing:-0.097px;left:334.85px;top:431.00px;">ven.</span>
<span class="t " style="font:normal 12px 'Liberation Sans', sans-serif;letter-spacing:-0.129px;left:364.25px;top:431.00px;">sam.</span>
<span class="t " style="font:normal 12px 'Liberation Sans', sans-serif;letter-spacing:0.282px;left:396.10px;top:431.00px;">dim.</span>
<div class="a " style="left:211px;top:445px;width:209px;height:1px;background:#ececec;"></div>
<div class="a" style="left:393px;top:461px;width:29px;height:13px;background:#CCE8FF;border:1px solid #0A6CD6;border-radius:2px"></div>
<div class="a" style="left:394px;top:462px;width:27px;height:11px;border:1px dotted #112;"></div>
<span class="t " style="font:normal 12px 'Liberation Sans', sans-serif;letter-spacing:-0.280px;left:216.80px;top:447.00px;color:#6d6d6d;">24</span>
<span class="t " style="font:normal 12px 'Liberation Sans', sans-serif;letter-spacing:-0.280px;left:247.80px;top:447.00px;color:#6d6d6d;">25</span>
<span class="t " style="font:normal 12px 'Liberation Sans', sans-serif;letter-spacing:-0.280px;left:278.80px;top:447.00px;color:#6d6d6d;">26</span>
<span class="t " style="font:normal 12px 'Liberation Sans', sans-serif;letter-spacing:-0.280px;left:309.80px;top:447.00px;color:#6d6d6d;">27</span>
<span class="t " style="font:normal 12px 'Liberation Sans', sans-serif;letter-spacing:-0.280px;left:340.80px;top:447.00px;color:#6d6d6d;">28</span>
<span class="t " style="font:normal 12px 'Liberation Sans', sans-serif;letter-spacing:-0.188px;left:378.10px;top:447.00px;">1</span>
<span class="t " style="font:normal 12px 'Liberation Sans', sans-serif;letter-spacing:-0.188px;left:409.10px;top:447.00px;">2</span>
<span class="t " style="font:normal 12px 'Liberation Sans', sans-serif;letter-spacing:-0.188px;left:223.10px;top:462.00px;">3</span>
<span class="t " style="font:normal 12px 'Liberation Sans', sans-serif;letter-spacing:-0.188px;left:254.10px;top:462.00px;">4</span>
<span class="t " style="font:normal 12px 'Liberation Sans', sans-serif;letter-spacing:-0.188px;left:285.10px;top:462.00px;">5</span>
<span class="t " style="font:normal 12px 'Liberation Sans', sans-serif;letter-spacing:-0.188px;left:316.10px;top:462.00px;">6</span>
<span class="t " style="font:normal 12px 'Liberation Sans', sans-serif;letter-spacing:-0.188px;left:347.10px;top:462.00px;">7</span>
<span class="t " style="font:normal 12px 'Liberation Sans', sans-serif;letter-spacing:-0.188px;left:378.10px;top:462.00px;">8</span>
<span class="t " style="font:normal 12px 'Liberation Sans', sans-serif;letter-spacing:-0.188px;left:409.10px;top:462.00px;">9</span>
<span class="t " style="font:normal 12px 'Liberation Sans', sans-serif;letter-spacing:-0.280px;left:216.80px;top:477.00px;">10</span>
<span class="t " style="font:normal 12px 'Liberation Sans', sans-serif;letter-spacing:0.166px;left:247.80px;top:477.00px;">11</span>
<span class="t " style="font:normal 12px 'Liberation Sans', sans-serif;letter-spacing:-0.280px;left:278.80px;top:477.00px;">12</span>
<span class="t " style="font:normal 12px 'Liberation Sans', sans-serif;letter-spacing:-0.280px;left:309.80px;top:477.00px;">13</span>
<span class="t " style="font:normal 12px 'Liberation Sans', sans-serif;letter-spacing:-0.280px;left:340.80px;top:477.00px;">14</span>
<span class="t " style="font:normal 12px 'Liberation Sans', sans-serif;letter-spacing:-0.280px;left:371.80px;top:477.00px;">15</span>
<span class="t " style="font:normal 12px 'Liberation Sans', sans-serif;letter-spacing:-0.280px;left:402.80px;top:477.00px;">16</span>
<span class="t " style="font:normal 12px 'Liberation Sans', sans-serif;letter-spacing:-0.280px;left:216.80px;top:492.00px;">17</span>
<span class="t " style="font:normal 12px 'Liberation Sans', sans-serif;letter-spacing:-0.280px;left:247.80px;top:492.00px;">18</span>
<span class="t " style="font:normal 12px 'Liberation Sans', sans-serif;letter-spacing:-0.280px;left:278.80px;top:492.00px;">19</span>
<span class="t " style="font:normal 12px 'Liberation Sans', sans-serif;letter-spacing:-0.280px;left:309.80px;top:492.00px;">20</span>
<span class="t " style="font:normal 12px 'Liberation Sans', sans-serif;letter-spacing:-0.280px;left:340.80px;top:492.00px;">21</span>
<span class="t " style="font:normal 12px 'Liberation Sans', sans-serif;letter-spacing:-0.280px;left:371.80px;top:492.00px;">22</span>
<span class="t " style="font:normal 12px 'Liberation Sans', sans-serif;letter-spacing:-0.280px;left:402.80px;top:492.00px;">23</span>
<span class="t " style="font:normal 12px 'Liberation Sans', sans-serif;letter-spacing:-0.280px;left:216.80px;top:507.00px;">24</span>
<span class="t " style="font:normal 12px 'Liberation Sans', sans-serif;letter-spacing:-0.280px;left:247.80px;top:507.00px;">25</span>
<span class="t " style="font:normal 12px 'Liberation Sans', sans-serif;letter-spacing:-0.280px;left:278.80px;top:507.00px;">26</span>
<span class="t " style="font:normal 12px 'Liberation Sans', sans-serif;letter-spacing:-0.280px;left:309.80px;top:507.00px;">27</span>
<span class="t " style="font:normal 12px 'Liberation Sans', sans-serif;letter-spacing:-0.280px;left:340.80px;top:507.00px;">28</span>
<span class="t " style="font:normal 12px 'Liberation Sans', sans-serif;letter-spacing:-0.280px;left:371.80px;top:507.00px;">29</span>
<span class="t " style="font:normal 12px 'Liberation Sans', sans-serif;letter-spacing:-0.280px;left:402.80px;top:507.00px;">30</span>
<span class="t " style="font:normal 12px 'Liberation Sans', sans-serif;letter-spacing:-0.280px;left:216.80px;top:522.00px;">31</span>
<span class="t " style="font:normal 12px 'Liberation Sans', sans-serif;letter-spacing:-0.188px;left:254.10px;top:522.00px;color:#6d6d6d;">1</span>
<span class="t " style="font:normal 12px 'Liberation Sans', sans-serif;letter-spacing:-0.188px;left:285.10px;top:522.00px;color:#6d6d6d;">2</span>
<span class="t " style="font:normal 12px 'Liberation Sans', sans-serif;letter-spacing:-0.188px;left:316.10px;top:522.00px;color:#6d6d6d;">3</span>
<span class="t " style="font:normal 12px 'Liberation Sans', sans-serif;letter-spacing:-0.188px;left:347.10px;top:522.00px;color:#6d6d6d;">4</span>
<span class="t " style="font:normal 12px 'Liberation Sans', sans-serif;letter-spacing:-0.188px;left:378.10px;top:522.00px;color:#6d6d6d;">5</span>
<span class="t " style="font:normal 12px 'Liberation Sans', sans-serif;letter-spacing:-0.188px;left:409.10px;top:522.00px;color:#6d6d6d;">6</span>
<div class="a" style="left:243px;top:538px;width:27px;height:11px;background:#fff;border:1px solid #0066CC;border-radius:2px"></div>
<span class="t " style="font:normal 12px 'Liberation Sans', sans-serif;letter-spacing:0.053px;left:277.00px;top:538.00px;">Aujourd&#x27;hui : 09/03/2025</span>
<div class="a " style="left:14px;top:678px;width:71px;height:19px;background:#E1E1E1;border:1px solid #ADADAD;"></div>
<span class="t " style="font:normal 16px 'DejaVu Sans', sans-serif;left:23.50px;top:680.00px;">✕</span>
<span class="t " style="font:normal 12px 'Liberation Sans', sans-serif;letter-spacing:-0.217px;left:41.00px;top:682.00px;">Quitter</span>
<div class="a" style="left:0;top:0;width:1066px;height:1px;background:linear-gradient(to right,#5a1c20 0,#5a1c20 42px,#5c5c5c 43px,#555 455px,#1d3550 456px,#162a4a 100%)"></div>
<div class="a" style="left:0;top:1px;width:1px;height:712px;background:linear-gradient(to bottom,#6e6e6e 0,#6a6a6a 170px,#34485a 200px,#2c3c4c 100%)"></div>
<div class="a" style="left:1065px;top:0;width:1px;height:713px;background:#12284f"></div>
<div class="a" style="left:0;top:712px;width:1066px;height:1px;background:#1b2c4d"></div>
</body></html>
